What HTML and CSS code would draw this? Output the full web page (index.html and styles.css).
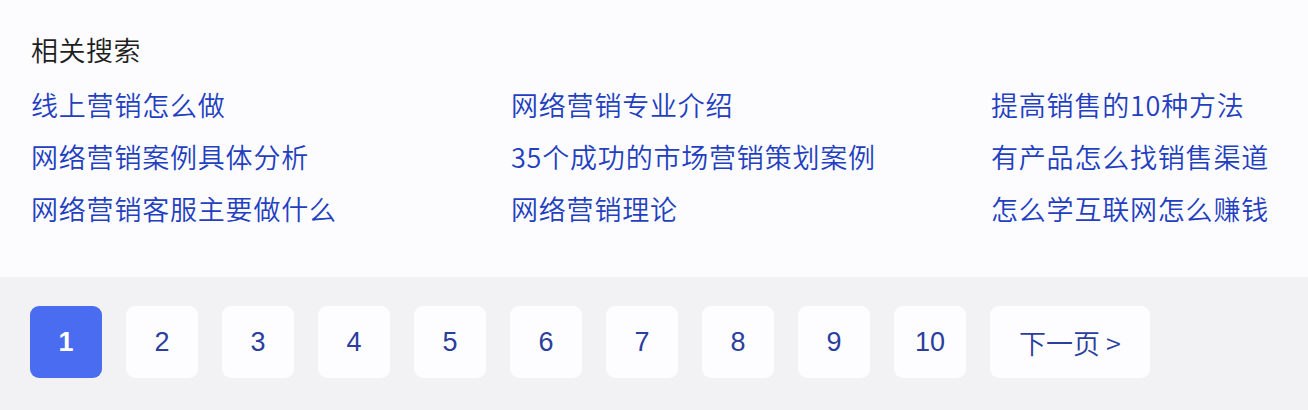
FILE: index.html
```html
<!DOCTYPE html>
<html lang="zh-CN">
<head>
  <meta charset="UTF-8">
  <meta name="viewport" content="width=device-width, initial-scale=1.0">
  <title>相关搜索</title>
  <link rel="stylesheet" href="styles.css">
</head>
<body>
  <section class="related">
    <h2>相关搜索</h2>
    <div class="links">
      <a href="#">线上营销怎么做</a>
      <a href="#">网络营销专业介绍</a>
      <a href="#">提高销售的10种方法</a>
      <a href="#">网络营销案例具体分析</a>
      <a href="#">35个成功的市场营销策划案例</a>
      <a href="#">有产品怎么找销售渠道</a>
      <a href="#">网络营销客服主要做什么</a>
      <a href="#">网络营销理论</a>
      <a href="#">怎么学互联网怎么赚钱</a>
    </div>
  </section>

  <nav class="pager">
    <a href="#" class="page active">1</a>
    <a href="#" class="page">2</a>
    <a href="#" class="page">3</a>
    <a href="#" class="page">4</a>
    <a href="#" class="page">5</a>
    <a href="#" class="page">6</a>
    <a href="#" class="page">7</a>
    <a href="#" class="page">8</a>
    <a href="#" class="page">9</a>
    <a href="#" class="page">10</a>
    <a href="#" class="page next">下一页 &gt;</a>
  </nav>
</body>
</html>
```

FILE: styles.css
```css
body {
  margin: 0;
  font-family: "Noto Sans CJK SC", "Liberation Sans", sans-serif;
  background-color: #f2f2f5;
}
a {
  text-decoration: none;
}
.related {
  background-color: #fcfcfe;
  padding: 32px 31px 0;
  height: 245px;
}
.related h2 {
  margin: 0 0 11px;
  font-size: 27px;
  font-weight: 350;
  line-height: 36px;
  color: #1e1e1e;
  letter-spacing: 0.5px;
}
.links {
  display: grid;
  grid-template-columns: 480px 480px 1fr;
}
.links a {
  font-size: 27px;
  font-weight: 350;
  line-height: 52px;
  color: #233fc0;
  letter-spacing: 0.8px;
}
.pager {
  display: flex;
  gap: 24px;
  padding: 29px 30px;
}
.page {
  width: 72px;
  height: 72px;
  display: flex;
  align-items: center;
  justify-content: center;
  background-color: #fdfdff;
  border-radius: 9px;
  font-family: "Liberation Sans", sans-serif;
  font-size: 27px;
  color: #2b3e9e;
}
.page.active {
  background-color: #4a6cf0;
  color: #fff;
  font-weight: bold;
}
.page.next {
  width: 160px;
  font-family: "Noto Sans CJK SC", "Liberation Sans", sans-serif;
  font-weight: 350;
  font-size: 27px;
}
```
